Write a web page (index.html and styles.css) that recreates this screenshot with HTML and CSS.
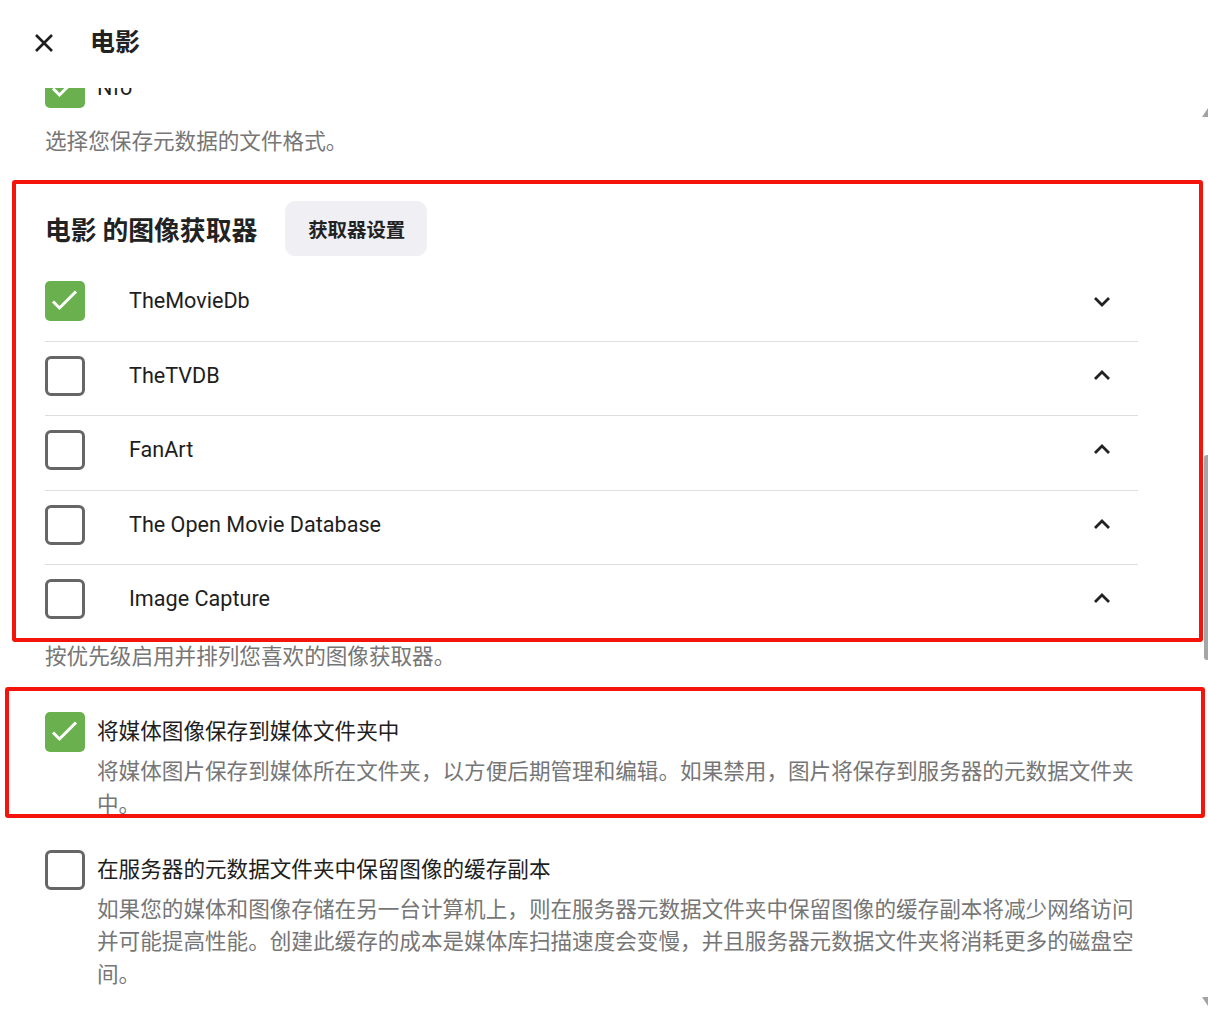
FILE: index.html
```html
<!DOCTYPE html>
<html lang="zh-CN">

<head>
    <meta charset="UTF-8">
    <meta name="viewport" content="width=device-width, initial-scale=1.0">
    <title>电影</title>
    <link rel="stylesheet" href="styles.css">
</head>

<body>

    <header class="dialog-header">
        <button class="close-btn" title="关闭">
            <svg width="24" height="24" viewBox="0 0 24 24">
                <path d="M4 4 L20 20 M20 4 L4 20" />
            </svg>
        </button>
        <h1 class="dialog-title">电影</h1>
    </header>

    <div class="scroller">
        <div class="content">

            <div class="check-row nfo-row">
                <span class="checkbox checked">
                    <svg width="40" height="40" viewBox="0 0 40 40"><path d="M8 20.5 L14.5 27 L31 10.5" /></svg>
                </span>
                <span class="check-label">Nfo</span>
            </div>
            <p class="field-desc desc-first">选择您保存元数据的文件格式。</p>

            <section class="fetchers marked">
                <div class="fetchers-head">
                    <h2 class="section-title">电影 的图像获取器</h2>
                    <button class="btn-soft">获取器设置</button>
                </div>

                <ul class="fetcher-list">
                    <li class="fetcher">
                        <span class="checkbox checked">
                            <svg width="40" height="40" viewBox="0 0 40 40"><path d="M8 20.5 L14.5 27 L31 10.5" /></svg>
                        </span>
                        <span class="fetcher-name">TheMovieDb</span>
                        <svg class="chevron" width="24" height="24" viewBox="0 0 24 24"><path d="M5 9 L12 16 L19 9" /></svg>
                    </li>
                    <li class="fetcher">
                        <span class="checkbox"></span>
                        <span class="fetcher-name">TheTVDB</span>
                        <svg class="chevron" width="24" height="24" viewBox="0 0 24 24"><path d="M5 15 L12 8 L19 15" /></svg>
                    </li>
                    <li class="fetcher">
                        <span class="checkbox"></span>
                        <span class="fetcher-name">FanArt</span>
                        <svg class="chevron" width="24" height="24" viewBox="0 0 24 24"><path d="M5 15 L12 8 L19 15" /></svg>
                    </li>
                    <li class="fetcher">
                        <span class="checkbox"></span>
                        <span class="fetcher-name">The Open Movie Database</span>
                        <svg class="chevron" width="24" height="24" viewBox="0 0 24 24"><path d="M5 15 L12 8 L19 15" /></svg>
                    </li>
                    <li class="fetcher">
                        <span class="checkbox"></span>
                        <span class="fetcher-name">Image Capture</span>
                        <svg class="chevron" width="24" height="24" viewBox="0 0 24 24"><path d="M5 15 L12 8 L19 15" /></svg>
                    </li>
                </ul>
            </section>
            <p class="field-desc desc-tight">按优先级启用并排列您喜欢的图像获取器。</p>

            <div class="field marked marked-2">
                <div class="check-row">
                    <span class="checkbox checked">
                        <svg width="40" height="40" viewBox="0 0 40 40"><path d="M8 20.5 L14.5 27 L31 10.5" /></svg>
                    </span>
                    <span class="check-label">将媒体图像保存到媒体文件夹中</span>
                </div>
                <p class="field-desc indent">将媒体图片保存到媒体所在文件夹，以方便后期管理和编辑。如果禁用，图片将保存到服务器的元数据文件夹中。</p>
            </div>

            <div class="field field-last">
                <div class="check-row">
                    <span class="checkbox"></span>
                    <span class="check-label">在服务器的元数据文件夹中保留图像的缓存副本</span>
                </div>
                <p class="field-desc indent">如果您的媒体和图像存储在另一台计算机上，则在服务器元数据文件夹中保留图像的缓存副本将减少网络访问并可能提高性能。创建此缓存的成本是媒体库扫描速度会变慢，并且服务器元数据文件夹将消耗更多的磁盘空间。</p>
            </div>

        </div>

        <div class="scrollbar">
            <div class="sb-arrow sb-up"></div>
            <div class="sb-thumb"></div>
            <div class="sb-arrow sb-down"></div>
        </div>
    </div>

</body>

</html>
```

FILE: styles.css
```css
* {
    margin: 0;
    padding: 0;
    box-sizing: border-box;
}

html,
body {
    height: 100%;
    overflow: hidden;
}

body {
    background-color: #fff;
    color: #1e1e1e;
    font-family: Roboto, "Noto Sans CJK SC", sans-serif;
    font-size: 21.6px;
    line-height: 1.5;
}

/* header */

.dialog-header {
    height: 88px;
    display: flex;
    align-items: center;
    padding-left: 20px;
    padding-bottom: 2px;
    background-color: #fff;
}

.close-btn {
    width: 48px;
    height: 48px;
    border: none;
    background: none;
    display: flex;
    align-items: center;
    justify-content: center;
}

.close-btn svg path {
    stroke: #1e1e1e;
    stroke-width: 2.6;
    fill: none;
}

.dialog-title {
    margin-left: 22px;
    margin-top: -4px;
    font-family: "Noto Sans CJK SC", sans-serif;
    font-size: 25px;
    font-weight: 700;
    color: #222;
}

/* scrolled body */

.scroller {
    height: calc(100% - 88px);
    display: flex;
    overflow: hidden;
}

.content {
    flex: 1;
    padding: 0 65px 0 45px;
}

.check-row {
    display: flex;
    align-items: center;
    height: 40px;
}

.nfo-row {
    margin-top: -20px;
}

.checkbox {
    width: 40px;
    height: 40px;
    flex-shrink: 0;
    border: 3px solid #666;
    border-radius: 6px;
    display: flex;
    align-items: center;
    justify-content: center;
}

.checkbox.checked {
    border: none;
    background-color: #6ab04f;
    border-radius: 5px;
}

.checkbox svg path {
    stroke: #fff;
    stroke-width: 3;
    fill: none;
}

.check-label {
    margin-left: 12px;
}

.field-desc {
    color: #767676;
}

.desc-first {
    margin-top: 18px;
}

.desc-tight {
    margin-top: 2px;
}

.indent {
    margin-left: 52px;
}

/* annotation boxes */

.marked {
    position: relative;
}

.marked::after {
    content: "";
    position: absolute;
    top: -21px;
    bottom: -3px;
    left: -33px;
    right: -65px;
    border: 4px solid #f5140c;
    border-radius: 3px;
    pointer-events: none;
}

.marked-2::after {
    top: -25px;
    bottom: 3px;
    left: -40px;
    right: -67px;
}

/* fetchers */

.fetchers {
    margin-top: 43px;
}

.fetchers-head {
    display: flex;
    align-items: center;
    height: 55px;
}

.section-title {
    font-family: "Noto Sans CJK SC", sans-serif;
    font-size: 25.8px;
    font-weight: 700;
    color: #222;
}

.btn-soft {
    margin-left: 28px;
    height: 55px;
    padding: 0 22px 0 23px;
    border: none;
    border-radius: 10px;
    background-color: #efeff4;
    color: #222;
    font-family: "Noto Sans CJK SC", sans-serif;
    font-size: 19.4px;
    font-weight: 700;
}

.fetcher-list {
    list-style: none;
    margin-top: 11px;
}

.fetcher {
    display: flex;
    align-items: center;
    padding: 14px 0 19.5px;
    border-bottom: 1px solid #ddd;
}

.fetcher:last-child {
    border-bottom: none;
}

.fetcher-name {
    flex: 1;
    margin-left: 44px;
}

.chevron {
    margin-right: 24px;
}

.chevron path {
    stroke: #222;
    stroke-width: 2.8;
    fill: none;
}

/* checkbox fields */

.field {
    margin-top: 39px;
}

.field .field-desc {
    margin-top: 4px;
}

.field-last {
    margin-top: 29px;
}

/* scrollbar */

.scrollbar {
    width: 5px;
    flex-shrink: 0;
}

.sb-arrow {
    width: 0;
    height: 0;
    margin-left: -1px;
    border-left: 6px solid transparent;
    border-right: 6px solid transparent;
}

.sb-up {
    margin-top: 20px;
    border-bottom: 9px solid #a3a3a3;
}

.sb-down {
    margin-top: 337px;
    border-top: 9px solid #a3a3a3;
}

.sb-thumb {
    margin-top: 338px;
    margin-left: 1px;
    height: 205px;
    background-color: #a6a6a6;
    border-radius: 3px 0 0 3px;
}
```
